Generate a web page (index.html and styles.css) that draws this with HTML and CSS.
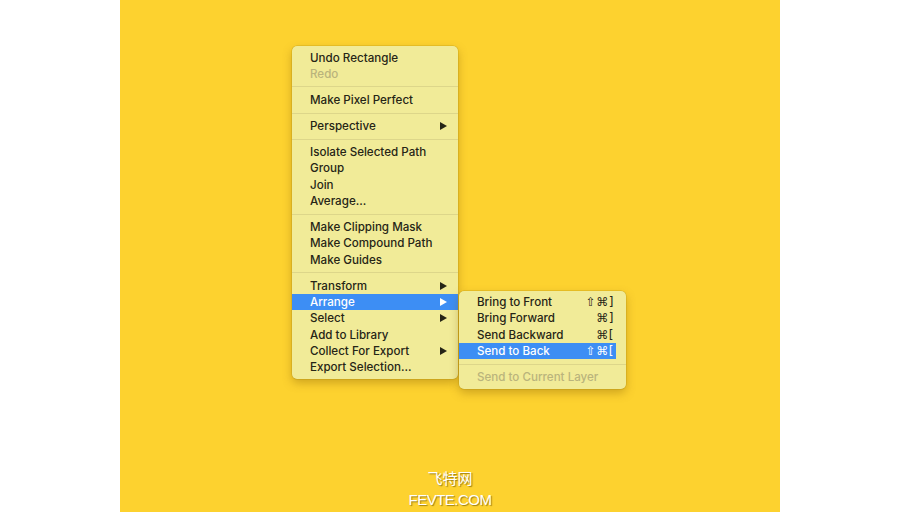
FILE: index.html
```html
<!DOCTYPE html>
<html lang="en">
<head>
    <meta charset="UTF-8">
    <title>Context menu</title>
    <link rel="stylesheet" href="styles.css">
</head>
<body>
    <div class="stage">
        <ul class="menu main-menu">
            <li class="item">Undo Rectangle</li>
            <li class="item disabled">Redo</li>
            <li class="sep"></li>
            <li class="item">Make Pixel Perfect</li>
            <li class="sep"></li>
            <li class="item has-sub">Perspective <svg class="arrow" viewBox="0 0 7 8"><polygon points="0,0 7,4 0,8"/></svg></li>
            <li class="sep"></li>
            <li class="item">Isolate Selected Path</li>
            <li class="item">Group</li>
            <li class="item">Join</li>
            <li class="item">Average...</li>
            <li class="sep"></li>
            <li class="item">Make Clipping Mask</li>
            <li class="item">Make Compound Path</li>
            <li class="item">Make Guides</li>
            <li class="sep"></li>
            <li class="item has-sub">Transform <svg class="arrow" viewBox="0 0 7 8"><polygon points="0,0 7,4 0,8"/></svg></li>
            <li class="item has-sub active">Arrange <svg class="arrow" viewBox="0 0 7 8"><polygon points="0,0 7,4 0,8"/></svg>
                <ul class="menu sub-menu">
                    <li class="item">Bring to Front <span class="key">⇧⌘]</span></li>
                    <li class="item">Bring Forward <span class="key">⌘]</span></li>
                    <li class="item">Send Backward <span class="key">⌘[</span></li>
                    <li class="item active">Send to Back <span class="key">⇧⌘[</span></li>
                    <li class="sep"></li>
                    <li class="item disabled">Send to Current Layer</li>
                </ul>
            </li>
            <li class="item has-sub">Select <svg class="arrow" viewBox="0 0 7 8"><polygon points="0,0 7,4 0,8"/></svg></li>
            <li class="item">Add to Library</li>
            <li class="item has-sub">Collect For Export <svg class="arrow" viewBox="0 0 7 8"><polygon points="0,0 7,4 0,8"/></svg></li>
            <li class="item">Export Selection...</li>
        </ul>

        <div class="watermark">
            <div class="wm-cn">飞特网</div>
            <div class="wm-en">FEVTE.COM</div>
        </div>
    </div>
</body>
</html>
```

FILE: styles.css
```css
body {
    margin: 0;
    background-color: #fff;
    font-family: Inter, "DejaVu Sans", sans-serif;
}
.stage {
    position: relative;
    width: 660px;
    height: 512px;
    margin-left: 120px;
    background-color: #fdd22f;
    display: flex;
    flex-direction: column;
    justify-content: flex-end;
    align-items: center;
    overflow: hidden;
}
.menu {
    list-style: none;
    margin: 0;
    padding: 3.5px 0;
    background-color: #f1eb98;
    border-radius: 5px;
    box-shadow: 0 0 0 0.5px rgba(150, 120, 0, 0.35), 0 4px 10px rgba(120, 80, 0, 0.35);
    font-size: 11.6px;
    font-weight: 500;
    color: #262516;
}
.main-menu {
    position: absolute;
    left: 172px;
    top: 46px;
    width: 166px;
}
.sub-menu {
    position: absolute;
    left: calc(100% + 1px);
    top: -3.5px;
    width: 167px;
    color: #262516;
}
.item {
    position: relative;
    height: 16.3px;
    line-height: 16.3px;
    padding: 0 11px 0 18px;
    display: flex;
    align-items: center;
    justify-content: space-between;
    white-space: nowrap;
}
.item.disabled {
    color: #bab47c;
}
.item.active {
    background-color: #3d8ef4;
    color: #fff;
}
.sub-menu .item {
    margin-right: 10px;
    padding: 0 2px 0 18px;
}
.sub-menu .item.active {
    color: #fff;
}
.sep {
    height: 9.8px;
    display: flex;
    align-items: center;
}
.sep::after {
    content: "";
    display: block;
    width: 100%;
    height: 1px;
    background-color: #ddd68a;
}
.arrow {
    width: 7px;
    height: 8px;
    fill: #262516;
}
.item.active > .arrow {
    fill: #fff;
}
.key {
    font-family: "DejaVu Sans", sans-serif;
    font-size: 12px;
    font-weight: normal;
    letter-spacing: 0.5px;
}
.watermark {
    padding-bottom: 1px;
    color: #fff;
    text-align: center;
    text-shadow: 1px 1px 1px rgba(90, 70, 0, 0.6);
}
.wm-cn {
    font-family: "Noto Sans CJK SC", sans-serif;
    font-size: 15px;
    line-height: 22px;
}
.wm-en {
    font-family: "Liberation Sans", sans-serif;
    font-size: 15px;
    line-height: 22px;
    letter-spacing: -0.5px;
}
```
